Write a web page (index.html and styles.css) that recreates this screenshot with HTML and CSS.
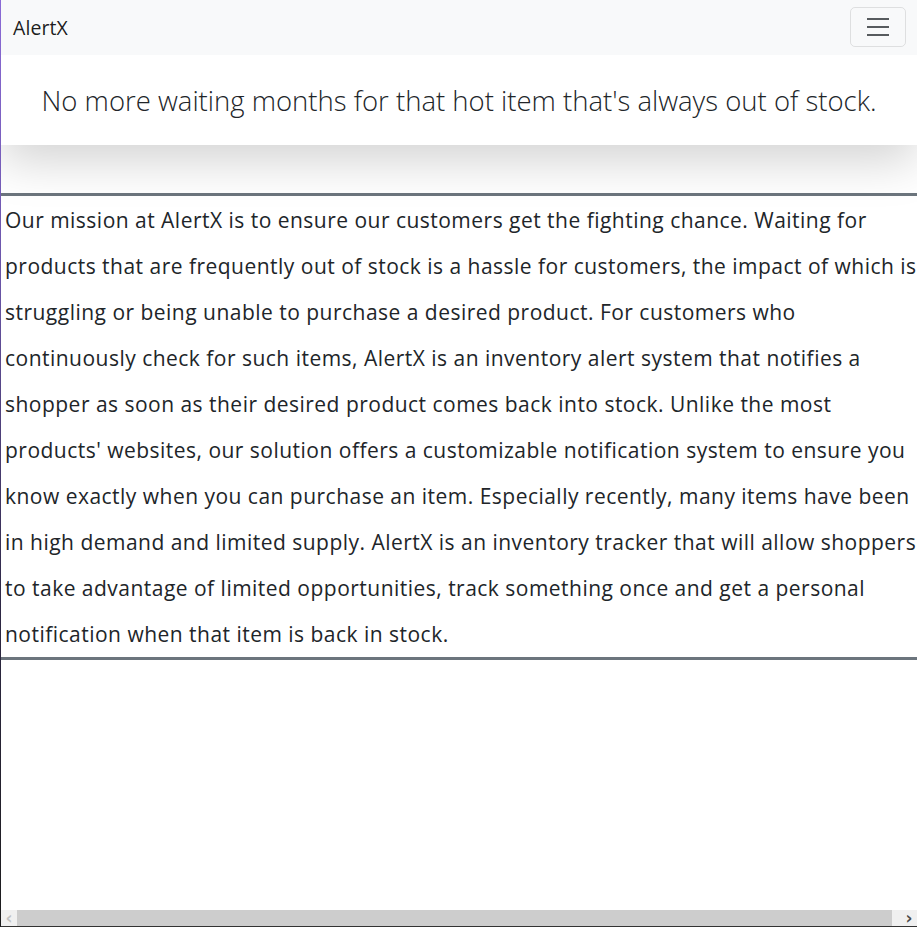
FILE: index.html
```
<!DOCTYPE html>
<html lang="en">
<head>
<meta charset="utf-8">
<title>AlertX</title>
<link rel="stylesheet" href="styles.css">
</head>
<body>
<div class="page">
  <nav class="navbar">
    <span class="brand">AlertX</span>
    <button class="toggler" type="button" aria-label="Toggle navigation">
      <svg class="toggler-icon" width="30" height="30" viewBox="0 0 30 30"><path d="M4 7h22M4 15h22M4 23h22" stroke="rgba(33,37,41,0.75)" stroke-width="2" stroke-linecap="butt"/></svg>
    </button>
  </nav>
  <header class="hero">
    <h1 class="hero-title">No more waiting months for that hot item that's always out of stock.</h1>
  </header>
  <section class="mission">
    <p class="mission-text">Our mission at AlertX is to ensure our customers get the fighting chance. Waiting for products that are frequently out of stock is a hassle for customers, the impact of which is struggling or being unable to purchase a desired product. For customers who continuously check for such items, AlertX is an inventory alert system that notifies a shopper as soon as their desired product comes back into stock. Unlike the most products' websites, our solution offers a customizable notification system to ensure you know exactly when you can purchase an item. Especially recently, many items have been in high demand and limited supply. AlertX is an inventory tracker that will allow shoppers to take advantage of limited opportunities, track something once and get a personal notification when that item is back in stock.</p>
  </section>
</div>
<div class="hscroll">
  <span class="arrow arrow-left">&#8249;</span>
  <span class="thumb"></span>
  <span class="arrow arrow-right">&#8250;</span>
</div>
</body>
</html>
```
FILE: styles.css
```
html, body { margin: 0; padding: 0; }
body {
  min-height: 100vh;
  display: flex;
  flex-direction: column;
  box-sizing: border-box;
  border-left: 1px solid #222;
  border-image: linear-gradient(to bottom, #8a6ad6 0%, #6a55a8 30%, #2e2845 65%, #1c1c1c 100%) 1;
  font-family: "Open Sans", "Noto Sans", sans-serif;
  color: #212529;
  background: #fff;
  overflow: hidden;
}
.page { flex: 1; display: flex; flex-direction: column; }
.navbar {
  position: relative;
  z-index: 2;
  background: #f8f9fa;
  height: 55px;
  box-sizing: border-box;
  padding: 7px 11px 8px 12px;
  display: flex;
  align-items: center;
  justify-content: space-between;
}
.brand {
  font-size: 19.5px;
  color: rgba(0,0,0,0.9);
  letter-spacing: 0.1px;
}
.toggler {
  width: 56px;
  height: 40px;
  box-sizing: border-box;
  padding: 4px 12px;
  border: 1px solid rgba(0,0,0,0.1);
  border-radius: 5px;
  background: transparent;
  display: flex;
  align-items: center;
  justify-content: center;
  margin-top: -1px;
}
.toggler-icon { display: block; }
.hero {
  position: relative;
  z-index: 1;
  background: #fff;
  height: 90px;
  box-sizing: border-box;
  padding-top: 25px;
  box-shadow: 0 16px 48px rgba(0,0,0,0.175);
}
.hero-title {
  margin: 0;
  text-align: center;
  font-size: 27.5px;
  font-weight: 300;
  line-height: 42px;
  color: #212529;
}
.mission {
  margin-top: 48px;
  border-top: 3px solid #6c757d;
  border-bottom: 3px solid #6c757d;
  padding: 1px 0 0 4px;
}
.mission-text {
  margin: 0;
  font-size: 21px;
  letter-spacing: 0.48px;
  line-height: 46px;
}
.hscroll {
  height: 17px;
  box-sizing: border-box;
  background: #f0f0f0;
  border-bottom: 1px solid #333;
  display: flex;
  align-items: stretch;
}
.arrow {
  width: 16px;
  display: flex;
  align-items: center;
  justify-content: center;
  font-family: "DejaVu Sans", sans-serif;
  font-size: 17px;
  font-weight: bold;
  line-height: 1;
}
.arrow-left { color: #c2c2c2; }
.arrow-right { color: #4a4a4a; }
.thumb { flex: 1; background: #cdcdcd; margin-right: 9px; }
```
